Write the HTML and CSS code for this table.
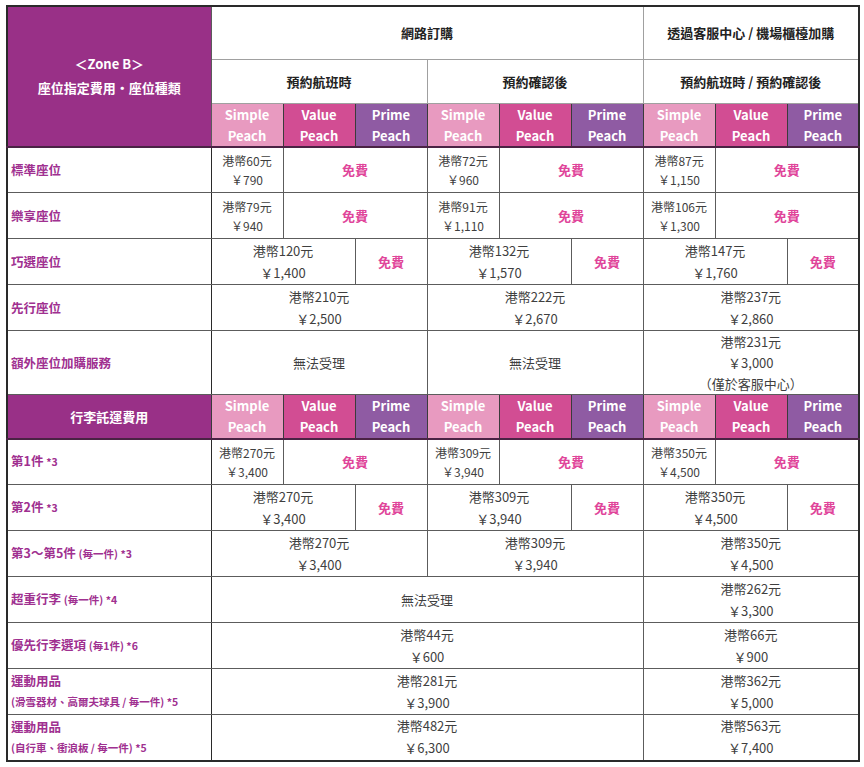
FILE: index.html
```html
<!DOCTYPE html>
<html lang="zh-Hant">
<head>
<meta charset="utf-8">
<title>Zone B 座位指定費用</title>
<link rel="stylesheet" href="styles.css">
</head>
<body>
<table class="fees">
  <colgroup>
    <col class="c-label">
    <col class="c-tier"><col class="c-tier"><col class="c-tier">
    <col class="c-tier"><col class="c-tier"><col class="c-tier">
    <col class="c-tier"><col class="c-tier"><col class="c-tier">
  </colgroup>
  <tr class="h1">
    <th rowspan="3" class="corner">＜Zone B＞<br>座位指定費用・座位種類</th>
    <th colspan="6" class="head">網路訂購</th>
    <th colspan="3" class="head">透過客服中心 / 機場櫃檯加購</th>
  </tr>
  <tr class="h2">
    <th colspan="3" class="head">預約航班時</th>
    <th colspan="3" class="head">預約確認後</th>
    <th colspan="3" class="head">預約航班時 / 預約確認後</th>
  </tr>
  <tr class="tiers">
    <th class="simple">Simple<br>Peach</th><th class="value">Value<br>Peach</th><th class="prime">Prime<br>Peach</th>
    <th class="simple">Simple<br>Peach</th><th class="value">Value<br>Peach</th><th class="prime">Prime<br>Peach</th>
    <th class="simple">Simple<br>Peach</th><th class="value">Value<br>Peach</th><th class="prime">Prime<br>Peach</th>
  </tr>

  <tr class="row">
    <th class="label">標準座位</th>
    <td class="price small">港幣60元<br>￥790</td><td colspan="2" class="free">免費</td>
    <td class="price small">港幣72元<br>￥960</td><td colspan="2" class="free">免費</td>
    <td class="price small">港幣87元<br>￥1,150</td><td colspan="2" class="free">免費</td>
  </tr>
  <tr class="row">
    <th class="label">樂享座位</th>
    <td class="price small">港幣79元<br>￥940</td><td colspan="2" class="free">免費</td>
    <td class="price small">港幣91元<br>￥1,110</td><td colspan="2" class="free">免費</td>
    <td class="price small">港幣106元<br>￥1,300</td><td colspan="2" class="free">免費</td>
  </tr>
  <tr class="row">
    <th class="label">巧選座位</th>
    <td colspan="2" class="price">港幣120元<br>￥1,400</td><td class="free">免費</td>
    <td colspan="2" class="price">港幣132元<br>￥1,570</td><td class="free">免費</td>
    <td colspan="2" class="price">港幣147元<br>￥1,760</td><td class="free">免費</td>
  </tr>
  <tr class="row">
    <th class="label">先行座位</th>
    <td colspan="3" class="price">港幣210元<br>￥2,500</td>
    <td colspan="3" class="price">港幣222元<br>￥2,670</td>
    <td colspan="3" class="price">港幣237元<br>￥2,860</td>
  </tr>
  <tr class="row tall">
    <th class="label">額外座位加購服務</th>
    <td colspan="3" class="price">無法受理</td>
    <td colspan="3" class="price">無法受理</td>
    <td colspan="3" class="price">港幣231元<br>￥3,000<br>（僅於客服中心）</td>
  </tr>

  <tr class="tiers bag">
    <th class="corner">行李託運費用</th>
    <th class="simple">Simple<br>Peach</th><th class="value">Value<br>Peach</th><th class="prime">Prime<br>Peach</th>
    <th class="simple">Simple<br>Peach</th><th class="value">Value<br>Peach</th><th class="prime">Prime<br>Peach</th>
    <th class="simple">Simple<br>Peach</th><th class="value">Value<br>Peach</th><th class="prime">Prime<br>Peach</th>
  </tr>
  <tr class="row">
    <th class="label">第1件 <span class="note">*3</span></th>
    <td class="price small">港幣270元<br>￥3,400</td><td colspan="2" class="free">免費</td>
    <td class="price small">港幣309元<br>￥3,940</td><td colspan="2" class="free">免費</td>
    <td class="price small">港幣350元<br>￥4,500</td><td colspan="2" class="free">免費</td>
  </tr>
  <tr class="row">
    <th class="label">第2件 <span class="note">*3</span></th>
    <td colspan="2" class="price">港幣270元<br>￥3,400</td><td class="free">免費</td>
    <td colspan="2" class="price">港幣309元<br>￥3,940</td><td class="free">免費</td>
    <td colspan="2" class="price">港幣350元<br>￥4,500</td><td class="free">免費</td>
  </tr>
  <tr class="row">
    <th class="label">第3～第5件 <span class="note">(毎一件) *3</span></th>
    <td colspan="3" class="price">港幣270元<br>￥3,400</td>
    <td colspan="3" class="price">港幣309元<br>￥3,940</td>
    <td colspan="3" class="price">港幣350元<br>￥4,500</td>
  </tr>
  <tr class="row">
    <th class="label">超重行李 <span class="note">(毎一件) *4</span></th>
    <td colspan="6" class="price">無法受理</td>
    <td colspan="3" class="price">港幣262元<br>￥3,300</td>
  </tr>
  <tr class="row">
    <th class="label">優先行李選項 <span class="note">(毎1件) *6</span></th>
    <td colspan="6" class="price">港幣44元<br>￥600</td>
    <td colspan="3" class="price">港幣66元<br>￥900</td>
  </tr>
  <tr class="row">
    <th class="label">運動用品<br><span class="note">(滑雪器材、高爾夫球具 / 毎一件) *5</span></th>
    <td colspan="6" class="price">港幣281元<br>￥3,900</td>
    <td colspan="3" class="price">港幣362元<br>￥5,000</td>
  </tr>
  <tr class="row">
    <th class="label">運動用品<br><span class="note">(自行車、衝浪板 / 毎一件) *5</span></th>
    <td colspan="6" class="price">港幣482元<br>￥6,300</td>
    <td colspan="3" class="price">港幣563元<br>￥7,400</td>
  </tr>
</table>
</body>
</html>
```
FILE: styles.css
```css
html, body {
  margin: 0;
  padding: 0;
  background: #ffffff;
}
body {
  padding: 5px 0 0 6px;
  font-family: "Noto Sans CJK TC", "Noto Sans CJK JP", "Noto Sans", sans-serif;
  color: #3a3a3a;
}
.fees {
  border-collapse: collapse;
  table-layout: fixed;
  width: 852px;
  border: 2px solid #2a2a2a;
}
.c-label { width: 204px; }
.c-tier { width: 72px; }

.fees th, .fees td {
  border: 1px solid #5c5c5c;
  padding: 0;
  text-align: center;
  vertical-align: middle;
}

.h1 { height: 53px; }
.h2 { height: 44px; }
.tiers { height: 43px; }
.bag { height: 44px; }
.row { height: 46px; }
.row.tall { height: 63px; }

.fees .corner {
  background: #993087;
  color: #ffffff;
  font-size: 13px;
  font-weight: 700;
  line-height: 24px;
  border-bottom: 2px solid #4a2344;
}
.fees .head {
  font-size: 13px;
  font-weight: 700;
  color: #222222;
  border-color: #a0a0a0;
}
.fees .tiers th {
  color: #ffffff;
  font-size: 13px;
  font-weight: 700;
  line-height: 21px;
  border-color: #3b3b3b;
  border-bottom: 2px solid #4a2344;
}
.fees .simple { background: #e89ac0; }
.fees .value { background: #d24d93; }
.fees .prime { background: #8f5ba3; }

.fees .label {
  text-align: left;
  padding: 0 0 0 3px;
  color: #a03090;
  font-size: 12.5px;
  font-weight: 700;
  line-height: 20px;
  border-right-color: #2a2a2a;
}
.note {
  font-size: 10.5px;
  font-weight: 700;
}
.fees .price {
  font-size: 13px;
  line-height: 22px;
  font-weight: 400;
  color: #3f3f3f;
}
.fees .price.small {
  font-size: 12px;
  line-height: 19px;
}
.fees .row.tall .price { line-height: 21px; }
.fees .free {
  color: #e0459a;
  font-size: 13px;
  font-weight: 700;
}
```
